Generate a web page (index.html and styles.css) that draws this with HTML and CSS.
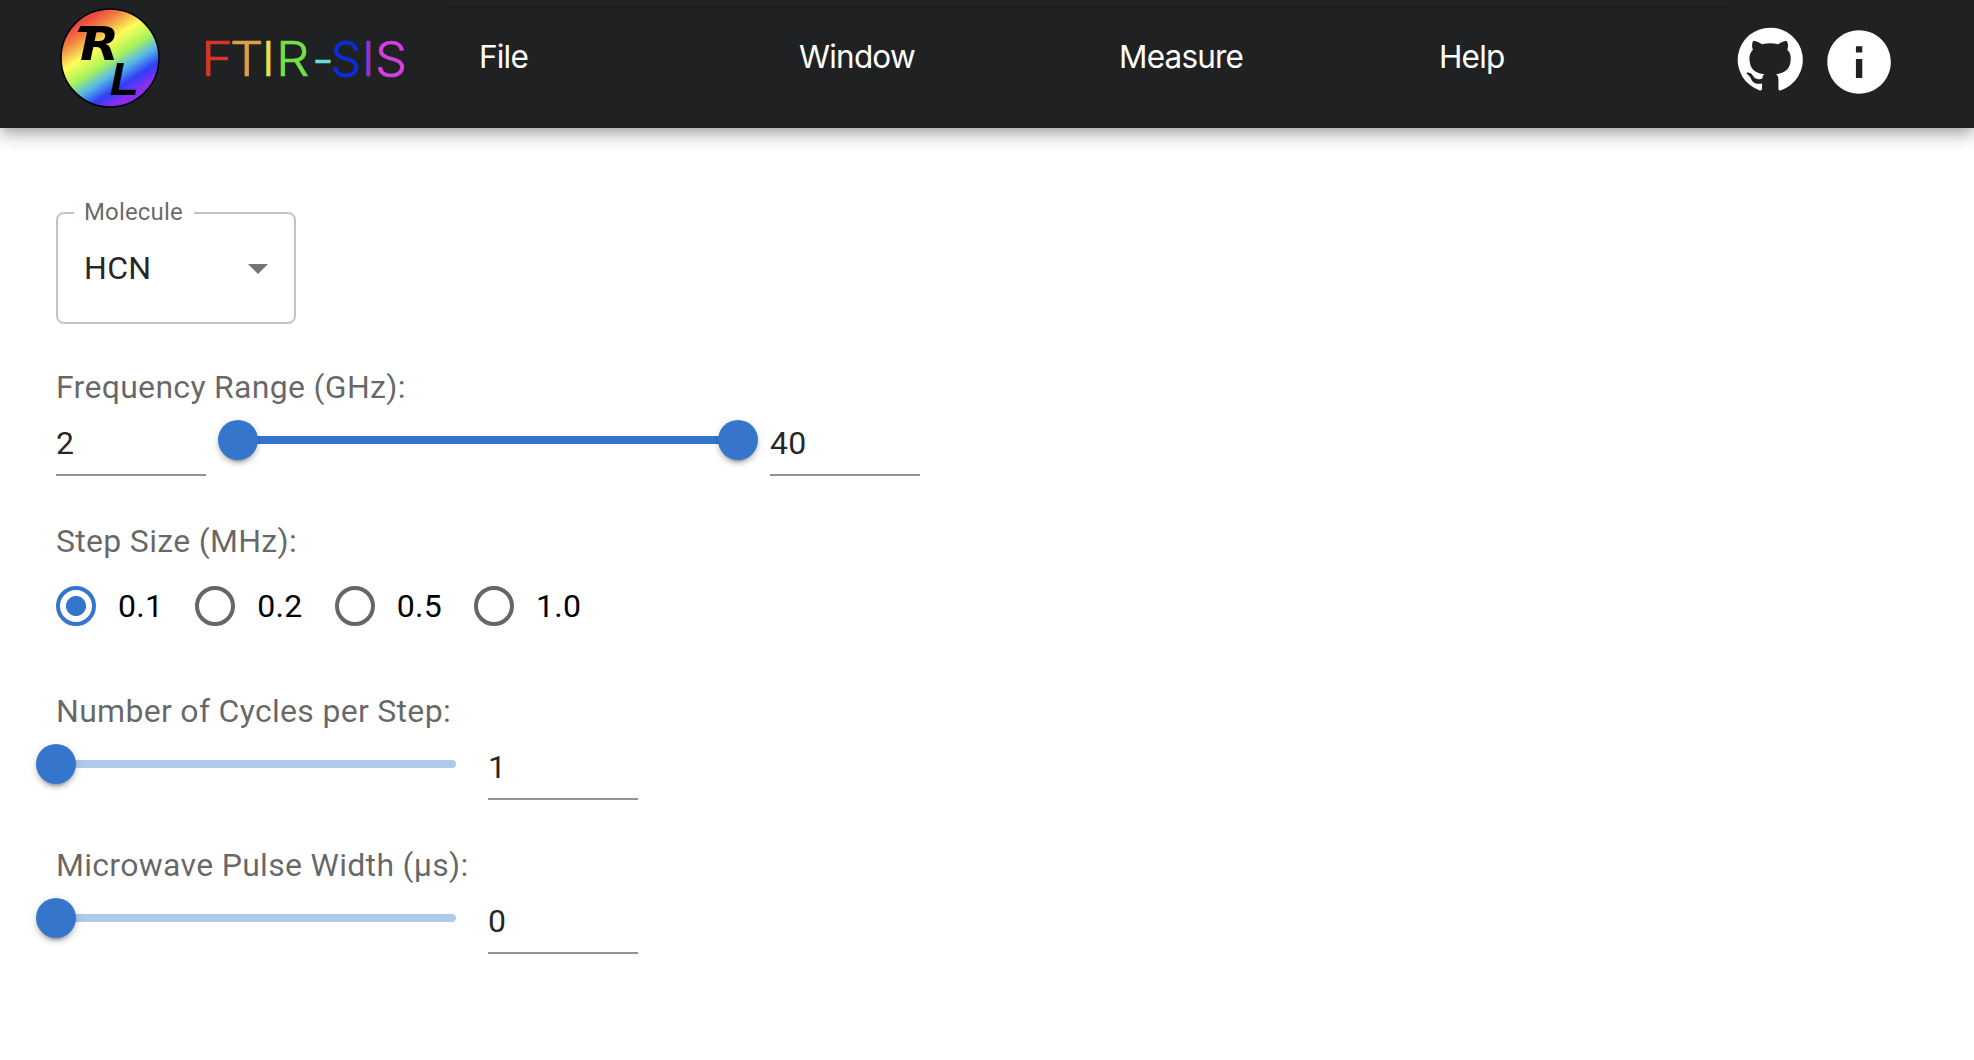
FILE: index.html
```html
<!DOCTYPE html>
<html lang="en">
<head>
<meta charset="utf-8">
<title>FTIR-SIS</title>
<link rel="stylesheet" href="styles.css">
</head>
<body>
<header class="appbar">
  <svg class="logo" viewBox="0 0 100 100" aria-label="RL">
    <defs>
      <linearGradient id="rainbow" gradientUnits="userSpaceOnUse" x1="24" y1="9" x2="77" y2="92">
        <stop offset="0.04" stop-color="#ef4a3e"/>
        <stop offset="0.15" stop-color="#f0803f"/>
        <stop offset="0.34" stop-color="#fffc5c"/>
        <stop offset="0.51" stop-color="#aaf45a"/>
        <stop offset="0.65" stop-color="#55b8e8"/>
        <stop offset="0.79" stop-color="#2f3ff5"/>
        <stop offset="0.92" stop-color="#8a2df3"/>
      </linearGradient>
    </defs>
    <circle cx="50" cy="50" r="49" fill="url(#rainbow)" stroke="#000" stroke-width="1.5"/>
    <path d="M20.500 18h17l-3 6H17.500z"/>
    <text class="logo-r" transform="translate(20 52) scale(1.1 1)">R</text>
    <text class="logo-l" x="50" y="87">L</text>
  </svg>
  <svg class="wordmark" viewBox="0 0 204 60" aria-label="FTIR-SIS">
    <text class="red" transform="translate(-1 48) scale(1.14 1)">F</text>
    <text class="orange" transform="translate(28 48) scale(1.1 1)">T</text>
    <text class="yellow" transform="translate(60 48)">I</text>
    <text class="green" transform="translate(74 48) scale(1.1 1)">R</text>
    <text class="cyan" transform="translate(110 48)">-</text>
    <text class="blue" transform="translate(129 48)">S</text>
    <text class="violet" transform="translate(160 48)">I</text>
    <text class="magenta" transform="translate(173 48) scale(1.06 1)">S</text>
  </svg>
  <nav class="menu">
    <a class="menu-item">File</a>
    <a class="menu-item">Window</a>
    <a class="menu-item">Measure</a>
    <a class="menu-item">Help</a>
  </nav>
  <div class="actions">
    <svg class="icon-github" viewBox="0 0 24 24"><path d="M12 1.27a11 11 0 00-3.48 21.46c.55.09.73-.28.73-.55v-1.84c-3.03.64-3.67-1.46-3.67-1.46-.55-1.29-1.28-1.65-1.28-1.65-.92-.65.1-.65.1-.65 1.1 0 1.73 1.1 1.73 1.1.92 1.65 2.57 1.2 3.21.92a2 2 0 01.64-1.47c-2.47-.27-5.04-1.19-5.04-5.5 0-1.1.46-2.1 1.2-2.84a3.76 3.76 0 010-2.93s.91-.28 3.11 1.1c1.8-.49 3.7-.49 5.5 0 2.1-1.38 3.02-1.1 3.02-1.1a3.76 3.76 0 01.1 2.93c.83.74 1.2 1.74 1.2 2.94 0 4.21-2.57 5.13-5.04 5.4.45.37.82.92.82 2.02v3.03c0 .27.1.64.73.55A11 11 0 0012 1.27"/></svg>
    <svg class="icon-info" viewBox="0 0 24 24"><path d="M12 2C6.48 2 2 6.48 2 12s4.48 10 10 10 10-4.48 10-10S17.52 2 12 2zm1 15h-2v-6h2v6zm0-8h-2V7h2v2z"/></svg>
  </div>
</header>
<main class="form">
  <div class="select">
    <span class="select-label">Molecule</span>
    <span class="select-value">HCN</span>
    <svg class="select-arrow" viewBox="0 0 20 10"><path d="M0 0h20L10 10z"/></svg>
  </div>

  <section class="field">
    <h2 class="label">Frequency Range (GHz):</h2>
    <div class="row">
      <span class="input">2</span>
      <div class="slider range"><i class="thumb"></i><i class="track"></i><i class="thumb"></i></div>
      <span class="input">40</span>
    </div>
  </section>

  <section class="field steps">
    <h2 class="label">Step Size (MHz):</h2>
    <div class="radios">
      <span class="radio checked"><i class="dot"></i>0.1</span>
      <span class="radio"><i class="dot"></i>0.2</span>
      <span class="radio"><i class="dot"></i>0.5</span>
      <span class="radio"><i class="dot"></i>1.0</span>
    </div>
  </section>

  <section class="field">
    <h2 class="label">Number of Cycles per Step:</h2>
    <div class="row">
      <div class="slider single"><i class="thumb"></i><i class="track"></i></div>
      <span class="input">1</span>
    </div>
  </section>

  <section class="field">
    <h2 class="label">Microwave Pulse Width (µs):</h2>
    <div class="row">
      <div class="slider single"><i class="thumb"></i><i class="track"></i></div>
      <span class="input">0</span>
    </div>
  </section>
</main>
</body>
</html>
```

FILE: styles.css
```css
* { box-sizing: border-box; }

body {
  margin: 0;
  background: #fff;
  font-family: Roboto, "Liberation Sans", sans-serif;
  font-size: 32px;
  line-height: 32px;
  letter-spacing: 0.3px;
  color: rgba(0, 0, 0, 0.87);
}

.appbar {
  display: flex;
  align-items: flex-start;
  height: 128px;
  padding-left: 60px;
  background: #202123;
  box-shadow: 0 5px 10px -2px rgba(0, 0, 0, 0.18), 0 10px 14px rgba(0, 0, 0, 0.13), 0 4px 22px rgba(0, 0, 0, 0.11);
}

.logo { width: 100px; height: 100px; margin-top: 8px; }
.logo-r { font: italic bold 46px "DejaVu Sans", sans-serif; letter-spacing: 0; }
.logo-l { font: italic bold 47px "Liberation Sans", sans-serif; letter-spacing: 0; }

.wordmark {
  width: 204px;
  height: 60px;
  margin: 28px 0 0 42px;
  font: 300 48px Inter, sans-serif;
  letter-spacing: 0;
}
.wordmark text { fill: currentColor; stroke: currentColor; stroke-width: 0.6px; }
.red { color: #d93629; }
.orange { color: #dfa045; }
.yellow { color: #e9e054; }
.green { color: #72e048; }
.cyan { color: #69ded2; }
.blue { color: #0b2be0; }
.violet { color: #8b35d9; }
.magenta { color: #d63fe0; }

.menu {
  display: flex;
  width: 1280px;
  height: 100px;
  margin: 6px 0 0 41px;
  border-top: 2px solid #1c1d1e;
}

.menu-item {
  width: 320px;
  padding: 32.5px 32px 0;
  font-family: Inter, "Liberation Sans", sans-serif;
  font-size: 31.5px;
  letter-spacing: -0.8px;
  color: #fff;
}

.actions { display: flex; gap: 15.9px; margin: 23.7px 0 0 7.6px; fill: #fff; }
.icon-github { width: 70.2px; height: 70.2px; }
.icon-info { width: 76.2px; height: 76.2px; }

.form { padding: 84px 56px 0; }

.select {
  position: relative;
  display: flex;
  align-items: center;
  justify-content: space-between;
  width: 240px;
  height: 112px;
  padding: 0 26px;
  border: 2px solid #c4c4c4;
  border-radius: 8px;
}

.select-label {
  position: absolute;
  left: 16px;
  top: -18px;
  width: 120px;
  padding-left: 10px;
  background: #fff;
  font-size: 24px;
  letter-spacing: 0.15px;
  color: rgba(0, 0, 0, 0.6);
}

.select-arrow { width: 20px; height: 10px; fill: #757575; margin-top: 2px; }

.field { margin-top: 49px; }
.select + .field { margin-top: 47px; }
.steps + .field { margin-top: 69px; }

.label { margin: 0; font: inherit; color: rgba(0, 0, 0, 0.6); }

.row { display: flex; gap: 32px; margin-top: 9px; height: 64px; }

.input {
  width: 150px;
  height: 64px;
  padding-top: 15px;
  border-bottom: 2px solid #949494;
}

.slider { display: flex; align-items: center; height: 56px; }
.track { flex: 1; height: 8px; border-radius: 4px; background: #3576cc; margin: 0 -20px; }
.thumb {
  width: 40px;
  height: 40px;
  margin-left: -20px;
  border-radius: 50%;
  background: #3576cc;
  box-shadow: 0 6px 2px -4px rgba(0, 0, 0, 0.2), 0 4px 4px rgba(0, 0, 0, 0.14), 0 2px 10px rgba(0, 0, 0, 0.12);
  z-index: 1;
}
.range { width: 500px; }
.range .thumb:last-child { margin: 0 -20px 0 0; }
.single { width: 400px; }
.single .track { margin-right: 0; background: #b0caec; }

.radios { display: flex; gap: 32px; height: 40px; margin-top: 29px; }
.radio { display: flex; align-items: center; gap: 22px; color: #000; }
.dot { width: 40px; height: 40px; border: 4px solid #666; border-radius: 50%; }
.checked .dot { border-color: #3576cc; background: radial-gradient(circle, #3576cc 9.6px, transparent 10.4px); }
```
